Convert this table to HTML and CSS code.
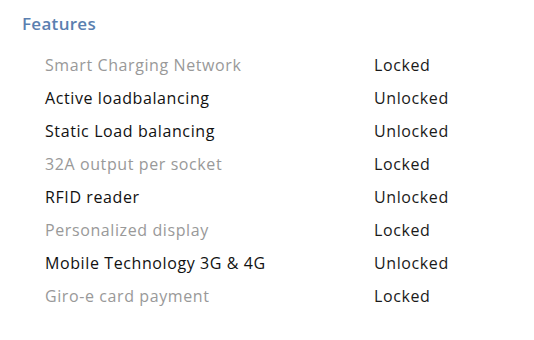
FILE: index.html
```html
<!DOCTYPE html>
<html lang="en">
<head>
    <meta charset="UTF-8">
    <title>Features</title>
    <link rel="stylesheet" href="styles.css">
</head>
<body>
    <h2>Features</h2>
    <div class="features">
        <div class="row locked"><span class="name">Smart Charging Network</span><span class="state">Locked</span></div>
        <div class="row"><span class="name">Active loadbalancing</span><span class="state">Unlocked</span></div>
        <div class="row"><span class="name">Static Load balancing</span><span class="state">Unlocked</span></div>
        <div class="row locked"><span class="name">32A output per socket</span><span class="state">Locked</span></div>
        <div class="row"><span class="name">RFID reader</span><span class="state">Unlocked</span></div>
        <div class="row locked"><span class="name">Personalized display</span><span class="state">Locked</span></div>
        <div class="row"><span class="name">Mobile Technology 3G &amp; 4G</span><span class="state">Unlocked</span></div>
        <div class="row locked"><span class="name">Giro-e card payment</span><span class="state">Locked</span></div>
    </div>
</body>
</html>
```

FILE: styles.css
```css
body {
    font-family: 'Open Sans', 'Noto Sans', sans-serif;
    background: #fff;
    color: #111;
    margin: 0;
    padding: 12px 22px;
}
h2 {
    font-size: 17px;
    font-weight: 600;
    color: #5a7fb0;
    margin: 0 0 13px;
    line-height: 24px;
    letter-spacing: 0.3px;
}
.features {
    padding-left: 23px;
}
.row {
    display: grid;
    grid-template-columns: 329px 1fr;
    height: 32.9px;
    align-items: center;
    font-size: 16px;
    letter-spacing: 0.6px;
}
.row .state {
    color: #1a1a1a;
}
.locked .name {
    color: #999;
}
```
